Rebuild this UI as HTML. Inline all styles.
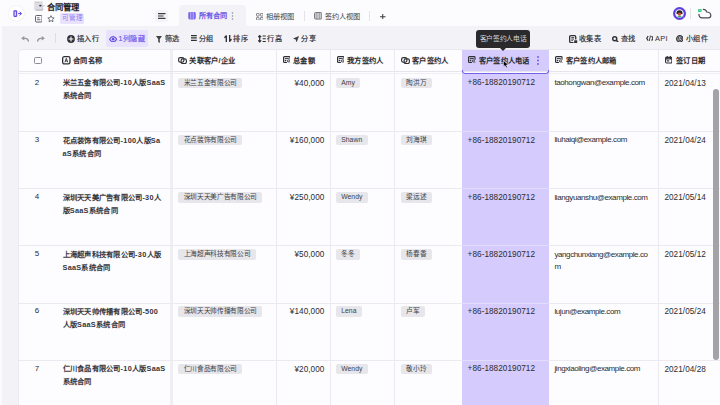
<!DOCTYPE html>
<html lang="zh-CN">
<head>
<meta charset="utf-8">
<style>
*{margin:0;padding:0;box-sizing:border-box}
html,body{width:720px;height:405px;overflow:hidden;background:#fcfbfe;font-family:"Liberation Sans",sans-serif;color:#1f2329}
.a{position:absolute}
#top{left:0;top:0;width:720px;height:26px;background:#fcfbfe}
#tb{left:0;top:26px;width:720px;height:379px;background:#f3f2f7}
#card{left:19px;top:50px;width:701px;height:355px;background:#fdfcff;border-top-left-radius:4px;overflow:hidden;box-shadow:0 0 0 0.7px #e6e5ec}
.t{white-space:nowrap;line-height:1}
.tbt{font-size:7.2px;letter-spacing:0.5px;font-weight:500;-webkit-text-stroke:0.18px currentColor;color:#2f3035;top:35.2px}
.hd{font-size:7.3px;letter-spacing:0.28px;font-weight:bold;color:#2b2c30;top:56.5px}
.cell{font-size:7.2px;color:#2b2c30}
.name{font-size:7.3px;letter-spacing:0.26px;font-weight:bold;color:#36373c;line-height:13px}
.tag{background:#e6e6eb;border-radius:2px;height:10.5px;font-size:6.7px;letter-spacing:-0.33px;line-height:10.5px;color:#404146;padding:0 5.5px}
.lat{font-size:8.2px;letter-spacing:0.05px;color:#2b2c30}
.num{font-size:8px;color:#2b2c30}
.email{white-space:nowrap;line-height:12.5px;font-size:8px;letter-spacing:-0.4px}
.L{letter-spacing:0.28px}
.tl{font-size:6.8px;letter-spacing:0.05px;padding:0 5.4px}
.vl{top:50px;width:1px;height:355px;background:#ebeaef}
.hl{left:19px;width:701px;height:1px;background:#ebeaef}
</style>
</head>
<body>
<div id="top" class="a"></div>
<div id="tb" class="a"></div>
<div class="a" style="left:0;top:26px;width:1.6px;height:379px;background:#fbfbfd"></div>

<!-- top bar -->
<div class="a" style="left:9.3px;top:6.3px;width:14.6px;height:14.6px;border-radius:50%;background:#fff;box-shadow:0 0 2px rgba(60,60,90,0.13)"></div>
<svg class="a" style="left:12.8px;top:10px" width="10" height="7" viewBox="0 0 10 7"><rect x="0.95" y="0.85" width="2.7" height="5.5" rx="0.5" fill="#d6cdfc" stroke="#5b45e0" stroke-width="1.1"/><path d="M5.1 3.6h3.3M6.6 1.7l1.9 1.9-1.9 1.9" fill="none" stroke="#5b45e0" stroke-width="1"/></svg>
<svg class="a" style="left:33.8px;top:1.4px" width="11" height="10" viewBox="0 0 11 10"><rect x="0.2" y="0.2" width="8.6" height="9.4" rx="0.6" fill="#dedee2"/><rect x="2" y="8.5" width="6.8" height="1.1" fill="#b4b4ba"/><rect x="1.2" y="1" width="4.5" height="0.8" fill="#c8c8cd"/><ellipse cx="6.4" cy="4.6" rx="1.3" ry="0.9" fill="#3d3d42"/><circle cx="10" cy="4.5" r="0.8" fill="#9fe3b8"/><circle cx="8.8" cy="5.8" r="0.8" fill="#c4b8ff"/><circle cx="8.8" cy="7.9" r="0.6" fill="#b3a9f5"/></svg>
<div class="a t" style="left:47px;top:2.9px;font-size:8.3px;font-weight:bold;color:#1f2024">合同管理</div>
<svg class="a" style="left:34.5px;top:15px" width="7.5" height="7.5" viewBox="0 0 8 8"><rect x="0.5" y="0.5" width="7" height="7" rx="1.2" fill="none" stroke="#55565c" stroke-width="1"/><path d="M2.2 3h2.6M2.2 5h3.6" stroke="#55565c" stroke-width="0.9"/></svg>
<svg class="a" style="left:47px;top:14.8px" width="8" height="7.5" viewBox="0 0 24 23"><path d="M12 2l2.9 6.3 6.9.8-5.1 4.7 1.4 6.8L12 17.2 5.9 20.6l1.4-6.8L2.2 9.1l6.9-.8z" fill="none" stroke="#55565c" stroke-width="2.4" stroke-linejoin="round"/></svg>
<div class="a" style="left:60px;top:12.5px;width:24px;height:11px;background:#e8e2fd;border-radius:1.5px"></div>
<div class="a t" style="left:62.3px;top:15.2px;font-size:6.6px;color:#8f7ef0">可管理</div>

<!-- hamburger -->
<div class="a" style="left:155px;top:9.5px;width:12.5px;height:12.5px;border-radius:2.5px;background:#f4f3f8"></div>
<svg class="a" style="left:157.5px;top:13px" width="8" height="6" viewBox="0 0 8 6"><path d="M0 0.6h7.5M0 3h5.5M0 5.4h7.5" stroke="#3a3b40" stroke-width="1.1"/></svg>

<!-- active tab -->
<div class="a" style="left:175.5px;top:23px;width:3px;height:3px;background:radial-gradient(circle at 0 0, transparent 3px, #f3f2f7 3.2px)"></div>
<div class="a" style="left:246px;top:23px;width:3px;height:3px;background:radial-gradient(circle at 100% 0, transparent 3px, #f3f2f7 3.2px)"></div>
<div class="a" style="left:178.5px;top:5px;width:67.5px;height:21px;background:#f3f2f7;border-radius:4px 4px 0 0"></div>
<svg class="a" style="left:188px;top:12px" width="8" height="7.5" viewBox="0 0 8 8"><rect x="0" y="0" width="8" height="8" rx="1.5" fill="#7a66ee"/><path d="M2.7 0v8M5.3 0v8" stroke="#f3f2f7" stroke-width="0.6"/></svg>
<div class="a t" style="left:198.5px;top:12.2px;font-size:7.2px;font-weight:bold;color:#6a57e3">所有合同</div>
<svg class="a" style="left:231px;top:12px" width="3" height="8" viewBox="0 0 3 8"><circle cx="1.5" cy="1" r="0.8" fill="#8d8e95"/><circle cx="1.5" cy="4" r="0.8" fill="#8d8e95"/><circle cx="1.5" cy="7" r="0.8" fill="#8d8e95"/></svg>

<!-- other tabs -->
<svg class="a" style="left:255.8px;top:12.5px" width="7.5" height="7.5" viewBox="0 0 8 8"><rect x="0.5" y="0.5" width="2.8" height="2.8" rx="0.6" fill="none" stroke="#6e6f76" stroke-width="0.9"/><rect x="4.7" y="0.5" width="2.8" height="2.8" rx="0.6" fill="none" stroke="#6e6f76" stroke-width="0.9"/><rect x="0.5" y="4.7" width="2.8" height="2.8" rx="0.6" fill="none" stroke="#6e6f76" stroke-width="0.9"/><rect x="4.7" y="4.7" width="2.8" height="2.8" rx="0.6" fill="none" stroke="#6e6f76" stroke-width="0.9"/></svg>
<div class="a t" style="left:266px;top:12.5px;font-size:7.2px;color:#3a3b40">相册视图</div>
<div class="a" style="left:303.5px;top:10.5px;width:1px;height:10px;background:#e3e3e8"></div>
<svg class="a" style="left:313.6px;top:12.4px" width="8.4" height="7.6" viewBox="0 0 8.4 7.6"><rect x="0.5" y="0.5" width="7.4" height="6.6" rx="1.2" fill="#c9cacf" stroke="#77787e" stroke-width="1"/><path d="M2.8 0.8v6M5.6 0.8v6" stroke="#8e8f95" stroke-width="0.7"/></svg>
<div class="a t" style="left:324.5px;top:12.5px;font-size:7.2px;color:#3a3b40">签约人视图</div>
<div class="a" style="left:369px;top:10.5px;width:1px;height:10px;background:#e3e3e8"></div>
<svg class="a" style="left:380px;top:13.5px" width="5.5" height="5.5" viewBox="0 0 6 6"><path d="M3 0v6M0 3h6" stroke="#3a3b40" stroke-width="1.1"/></svg>

<!-- avatar / cloud -->
<svg class="a" style="left:672.8px;top:7px" width="13" height="13" viewBox="0 0 26 26"><circle cx="13" cy="13" r="13" fill="#5b40dc"/><circle cx="13" cy="13" r="8.6" fill="#f2efff"/><path d="M7 12.5a6 6 0 0 1 12 0v1.5H7z" fill="#2e2424"/><ellipse cx="13" cy="14.2" rx="3.6" ry="3.4" fill="#b9553a"/><path d="M8.5 19.5c1.5-1.6 3-2 4.5-2s3 .4 4.5 2a8.6 8.6 0 0 1-9 0z" fill="#3aa86b"/><circle cx="6" cy="6" r="1" fill="#a98df7"/><circle cx="20.5" cy="20" r="1" fill="#a98df7"/></svg>
<div class="a" style="left:690px;top:8px;width:1px;height:11px;background:#e3e3e8"></div>
<svg class="a" style="left:694px;top:5px" width="22" height="16" viewBox="0 0 22 16"><path d="M9.4 4.4C11 4.4 12.2 5.4 12.8 7C15 7 16.8 8.6 16.8 10.6C16.8 12.1 15.7 12.9 14.4 12.9H8C6.1 12.9 4.9 11.3 4.9 9.3" fill="none" stroke="#4a4b51" stroke-width="1.2" stroke-linecap="round"/><rect x="4" y="4" width="3.7" height="3" rx="0.4" fill="#3fcf8a"/><circle cx="6" cy="5.5" r="0.8" fill="#7be0a8"/></svg>

<!-- toolbar -->
<svg class="a" style="left:21px;top:35.6px" width="8" height="6" viewBox="0 0 8 6"><path d="M0 2.3L3.3 0v4.6z" fill="#98999f"/><path d="M3 2.3h1.3c1.9 0 3 1.2 3.2 3.3" fill="none" stroke="#98999f" stroke-width="1.3"/></svg>
<svg class="a" style="left:37px;top:35.6px" width="8" height="6" viewBox="0 0 8 6"><path d="M8 2.3L4.7 0v4.6z" fill="#98999f"/><path d="M5 2.3H3.7C1.8 2.3.7 3.5.5 5.6" fill="none" stroke="#98999f" stroke-width="1.3"/></svg>
<div class="a" style="left:55px;top:33px;width:1px;height:10px;background:#dedde3"></div>

<svg class="a" style="left:66.5px;top:34.8px" width="8" height="8" viewBox="0 0 8 8"><circle cx="4" cy="4" r="3.9" fill="#2f3035"/><path d="M4 1.6v4.8M1.6 4h4.8" stroke="#fff" stroke-width="1.1"/></svg>
<div class="a t tbt" style="left:76.5px">插入行</div>

<div class="a" style="left:105.5px;top:30px;width:42.5px;height:17px;background:#e8e2fd;border-radius:2px"></div>
<svg class="a" style="left:108.8px;top:35.6px" width="8.2" height="6.4" viewBox="0 0 8.2 6.4"><path d="M0.6 3.2C1.6 1.4 2.8 0.6 4.1 0.6S6.6 1.4 7.6 3.2C6.6 5 5.4 5.8 4.1 5.8S1.6 5 0.6 3.2z" fill="none" stroke="#6552e0" stroke-width="1.2"/><circle cx="4.1" cy="3.2" r="1.35" fill="#6552e0"/></svg>
<div class="a t tbt" style="left:118.5px;color:#6e5ae8">1列隐藏</div>

<svg class="a" style="left:156px;top:35.5px" width="6" height="7" viewBox="0 0 6 7"><path d="M0 0h6L3.8 3v4L2.2 6V3z" fill="#404146"/></svg>
<div class="a t tbt" style="left:164.5px">筛选</div>
<svg class="a" style="left:191.3px;top:35px" width="6" height="6" viewBox="0 0 6 6"><path d="M0 0.6h5.8M0 2.95h5.8M0 5.3h5.8" stroke="#2f3035" stroke-width="1.25"/></svg>
<div class="a t tbt" style="left:198.5px">分组</div>
<svg class="a" style="left:223.6px;top:35.2px" width="8" height="7" viewBox="0 0 8 7"><path d="M2.3 7V0.8L0.4 2.7M5.7 0v6.2l1.9-1.9" fill="none" stroke="#2f3035" stroke-width="1.35" stroke-linejoin="round"/></svg>
<div class="a t tbt" style="left:233px">排序</div>
<svg class="a" style="left:257.6px;top:35px" width="8" height="7.5" viewBox="0 0 8 7.5"><path d="M1.7 0.6v6.3M0.2 2.1l1.5-1.5 1.5 1.5M0.2 5.4l1.5 1.5 1.5-1.5" fill="none" stroke="#2f3035" stroke-width="1.2"/><path d="M4.6 1h3.2M4.6 3.75h3.2M4.6 6.5h3.2" stroke="#2f3035" stroke-width="1.2"/></svg>
<div class="a t tbt" style="left:267px">行高</div>
<svg class="a" style="left:293px;top:35.5px" width="6" height="6.5" viewBox="0 0 6 6.5"><path d="M6 0L0 2.6l2.6 1 1 2.9z" fill="#404146"/></svg>
<div class="a t tbt" style="left:301px">分享</div>

<svg class="a" style="left:569px;top:34.5px" width="8.6" height="8.2" viewBox="0 0 8.6 8.2"><path d="M4.6 7.55H1.9A1.25 1.25 0 0 1 .65 6.3V1.9A1.25 1.25 0 0 1 1.9.65h3.6A1.25 1.25 0 0 1 6.75 1.9V4.5" fill="none" stroke="#2f3035" stroke-width="1.3"/><path d="M2.3 2.6h2.8M2.3 4.1h2.8M2.3 5.6h1.6" stroke="#2f3035" stroke-width="0.9"/><path d="M5.2 5.3h3v2.9h-3z" fill="#2f3035"/></svg>
<div class="a t tbt" style="left:578.5px">收集表</div>
<svg class="a" style="left:612.2px;top:35.6px" width="6.6" height="6.6" viewBox="0 0 7 7"><circle cx="2.9" cy="2.9" r="2.15" fill="none" stroke="#2f3035" stroke-width="1.5"/><path d="M4.5 4.5L6.5 6.5" stroke="#2f3035" stroke-width="1.6"/></svg>
<div class="a t tbt" style="left:620.5px">查找</div>
<svg class="a" style="left:645.6px;top:35.3px" width="7.8" height="6.6" viewBox="0 0 7.8 6.6"><path d="M2.2 1L0.7 3.3 2.2 5.6M5.6 1l1.5 2.3-1.5 2.3" fill="none" stroke="#2f3035" stroke-width="1.2" stroke-linejoin="round"/><path d="M4.5 0.6L3.3 6" stroke="#2f3035" stroke-width="0.9"/></svg>
<div class="a t tbt" style="left:655px;font-weight:normal;-webkit-text-stroke:0;font-size:7.4px;letter-spacing:0.3px;top:35.4px">API</div>
<svg class="a" style="left:675.8px;top:34.8px" width="7.6" height="7.6" viewBox="0 0 8 8"><circle cx="4" cy="4" r="3.35" fill="none" stroke="#2f3035" stroke-width="1.25"/><path d="M4 1.9L5.9 3v2.1L4 6.2 2.1 5.1V3z" fill="none" stroke="#2f3035" stroke-width="0.9"/><path d="M2.1 3L4 4.1 5.9 3M4 4.1v2.1" fill="none" stroke="#2f3035" stroke-width="0.7"/></svg>
<div class="a t tbt" style="left:685.5px">小组件</div>

<div id="card" class="a"></div>
<div class="a" style="left:461.5px;top:50px;width:87px;height:355px;background:#d5cbfc"></div>
<div class="a" style="left:276px;top:50px;width:1px;height:355px;background:#ebeaf0"></div>
<div class="a" style="left:330px;top:50px;width:1px;height:355px;background:#ebeaf0"></div>
<div class="a" style="left:394px;top:50px;width:1px;height:355px;background:#ebeaf0"></div>
<div class="a" style="left:658px;top:50px;width:1px;height:355px;background:#ebeaf0"></div>
<div class="a" style="left:170px;top:50px;width:3px;height:355px;background:#efeef3"></div>
<div class="a" style="left:19px;top:70.5px;width:701px;height:1px;background:#e6e5eb"></div>
<div class="a" style="left:19px;top:73px;width:701px;height:1px;background:#efeef3"></div>
<div class="a" style="left:462.5px;top:71.6px;width:85px;height:1.3px;background:#fbfaff"></div>
<div class="a" style="left:461.5px;top:70.4px;width:87px;height:4px;border:1.6px solid #7361ea;border-top:none;border-radius:0 0 3px 3px"></div>
<div class="a" style="left:19px;top:131px;width:701px;height:1px;background:#ebeaf0"></div>
<div class="a" style="left:461.5px;top:131px;width:87px;height:1px;background:#e3ddfd"></div>
<div class="a" style="left:19px;top:188.2px;width:701px;height:1px;background:#ebeaf0"></div>
<div class="a" style="left:461.5px;top:188.2px;width:87px;height:1px;background:#e3ddfd"></div>
<div class="a" style="left:19px;top:245.4px;width:701px;height:1px;background:#ebeaf0"></div>
<div class="a" style="left:461.5px;top:245.4px;width:87px;height:1px;background:#e3ddfd"></div>
<div class="a" style="left:19px;top:302.6px;width:701px;height:1px;background:#ebeaf0"></div>
<div class="a" style="left:461.5px;top:302.6px;width:87px;height:1px;background:#e3ddfd"></div>
<div class="a" style="left:19px;top:359.8px;width:701px;height:1px;background:#ebeaf0"></div>
<div class="a" style="left:461.5px;top:359.8px;width:87px;height:1px;background:#e3ddfd"></div>
<div class="a" style="left:34.4px;top:56.9px;width:7.5px;height:7px;border:1px solid #8d8e94;border-radius:1.5px"></div>
<svg class="a" style="left:62.3px;top:56.2px" width="8.6" height="8.6" viewBox="0 0 8.6 8.6"><rect x="0.65" y="0.65" width="7.3" height="7.3" rx="1.6" fill="none" stroke="#2f3035" stroke-width="1.3"/><path d="M2.9 6.3L4.3 2.3l1.4 4M3.4 5h1.8" fill="none" stroke="#2f3035" stroke-width="0.9"/></svg>
<div class="a t hd" style="left:73.1px">合同名称</div>
<svg class="a" style="left:178px;top:56.9px" width="9" height="7.2" viewBox="0 0 9 7.2"><rect x="0.6" y="0.6" width="5.3" height="4.7" rx="1.7" fill="none" stroke="#2f3035" stroke-width="1.15"/><rect x="3.1" y="1.9" width="5.3" height="4.7" rx="1.7" fill="none" stroke="#2f3035" stroke-width="1.15"/></svg>
<div class="a t hd" style="left:189.3px">关联客户/企业</div>
<svg class="a" style="left:282.6px;top:56.4px" width="7.6" height="7.2" viewBox="0 0 8 7.6"><path d="M4.2 6.9H1.4a.8.8 0 0 1-.8-.8V1.4a.8.8 0 0 1 .8-.8h5.2a.8.8 0 0 1 .8.8v2.6" fill="none" stroke="#2f3035" stroke-width="1.2"/><path d="M1.9 2.7h4.2" stroke="#2f3035" stroke-width="1"/><rect x="1.8" y="4" width="1.6" height="1.6" fill="#2f3035"/><circle cx="5.7" cy="5.2" r="1.15" fill="none" stroke="#2f3035" stroke-width="0.9"/><path d="M6.5 6l1.1 1.1" stroke="#2f3035" stroke-width="0.9"/></svg>
<div class="a t hd" style="left:293px">总金额</div>
<svg class="a" style="left:336.7px;top:56.4px" width="7.6" height="7.2" viewBox="0 0 8 7.6"><path d="M4.2 6.9H1.4a.8.8 0 0 1-.8-.8V1.4a.8.8 0 0 1 .8-.8h5.2a.8.8 0 0 1 .8.8v2.6" fill="none" stroke="#2f3035" stroke-width="1.2"/><path d="M1.9 2.7h4.2" stroke="#2f3035" stroke-width="1"/><rect x="1.8" y="4" width="1.6" height="1.6" fill="#2f3035"/><circle cx="5.7" cy="5.2" r="1.15" fill="none" stroke="#2f3035" stroke-width="0.9"/><path d="M6.5 6l1.1 1.1" stroke="#2f3035" stroke-width="0.9"/></svg>
<div class="a t hd" style="left:347px">我方签约人</div>
<svg class="a" style="left:400.7px;top:56.9px" width="9" height="7.2" viewBox="0 0 9 7.2"><rect x="0.6" y="0.6" width="5.3" height="4.7" rx="1.7" fill="none" stroke="#2f3035" stroke-width="1.15"/><rect x="3.1" y="1.9" width="5.3" height="4.7" rx="1.7" fill="none" stroke="#2f3035" stroke-width="1.15"/></svg>
<div class="a t hd" style="left:412px">客户签约人</div>
<svg class="a" style="left:468px;top:56.4px" width="7.6" height="7.2" viewBox="0 0 8 7.6"><path d="M4.2 6.9H1.4a.8.8 0 0 1-.8-.8V1.4a.8.8 0 0 1 .8-.8h5.2a.8.8 0 0 1 .8.8v2.6" fill="none" stroke="#2f3035" stroke-width="1.2"/><path d="M1.9 2.7h4.2" stroke="#2f3035" stroke-width="1"/><rect x="1.8" y="4" width="1.6" height="1.6" fill="#2f3035"/><circle cx="5.7" cy="5.2" r="1.15" fill="none" stroke="#2f3035" stroke-width="0.9"/><path d="M6.5 6l1.1 1.1" stroke="#2f3035" stroke-width="0.9"/></svg>
<div class="a t hd" style="left:478.8px">客户签约人电话</div>
<svg class="a" style="left:555px;top:56.4px" width="7.6" height="7.2" viewBox="0 0 8 7.6"><path d="M4.2 6.9H1.4a.8.8 0 0 1-.8-.8V1.4a.8.8 0 0 1 .8-.8h5.2a.8.8 0 0 1 .8.8v2.6" fill="none" stroke="#2f3035" stroke-width="1.2"/><path d="M1.9 2.7h4.2" stroke="#2f3035" stroke-width="1"/><rect x="1.8" y="4" width="1.6" height="1.6" fill="#2f3035"/><circle cx="5.7" cy="5.2" r="1.15" fill="none" stroke="#2f3035" stroke-width="0.9"/><path d="M6.5 6l1.1 1.1" stroke="#2f3035" stroke-width="0.9"/></svg>
<div class="a t hd" style="left:565.8px">客户签约人邮箱</div>
<svg class="a" style="left:664.9px;top:56.4px" width="7.5" height="7.6" viewBox="0 0 7.5 7.6"><rect x="0.6" y="1.4" width="6.3" height="5.6" rx="0.9" fill="none" stroke="#2f3035" stroke-width="1.15"/><path d="M2.2 0v2.2M5.3 0v2.2M0.6 2.9h6.3" stroke="#2f3035" stroke-width="1.1"/><rect x="2" y="4" width="2.2" height="1.7" fill="#6a6b70"/></svg>
<div class="a t hd" style="left:676px">签订日期</div>
<svg class="a" style="left:537.3px;top:56px" width="2" height="9" viewBox="0 0 2 9"><circle cx="1" cy="1" r="0.9" fill="#6a55e6"/><circle cx="1" cy="4.5" r="0.9" fill="#6a55e6"/><circle cx="1" cy="8" r="0.9" fill="#6a55e6"/></svg>
<div class="a t cell num" style="left:34.5px;top:78.6px;width:5px;text-align:center">2</div>
<div class="a name" style="left:62.5px;top:76.3px">米兰五金有限公司<span class="L">-10</span>人版<span class="L">SaaS</span><br>系统合同</div>
<div class="a t tag" style="left:178.1px;top:77.6px">米兰五金有限公司</div>
<div class="a t cell lat" style="right:395.6px;top:79.5px">¥40,000</div>
<div class="a t tag tl" style="left:335.8px;top:77.6px">Amy</div>
<div class="a t tag" style="left:400.7px;top:77.6px">陶洪万</div>
<div class="a t cell lat" style="left:467.6px;top:79.3px">+86-18820190712</div>
<div class="a cell lat email" style="left:554.4px;top:77.2px">taohongwan@example.com</div>
<div class="a t cell lat" style="left:664.4px;top:79.5px">2021/04/13</div>
<div class="a t cell num" style="left:34.5px;top:135.8px;width:5px;text-align:center">3</div>
<div class="a name" style="left:62.5px;top:133.5px">花点装饰有限公司<span class="L">-100</span>人版<span class="L">Sa</span><br><span class="L">aS</span>系统合同</div>
<div class="a t tag" style="left:178.1px;top:134.8px">花点装饰有限公司</div>
<div class="a t cell lat" style="right:395.6px;top:136.7px">¥160,000</div>
<div class="a t tag tl" style="left:335.8px;top:134.8px">Shawn</div>
<div class="a t tag" style="left:400.7px;top:134.8px">刘海琪</div>
<div class="a t cell lat" style="left:467.6px;top:136.5px">+86-18820190712</div>
<div class="a cell lat email" style="left:554.4px;top:134.4px">liuhaiqi@example.com</div>
<div class="a t cell lat" style="left:664.4px;top:136.7px">2021/04/24</div>
<div class="a t cell num" style="left:34.5px;top:193.0px;width:5px;text-align:center">4</div>
<div class="a name" style="left:62.5px;top:190.7px">深圳天天美广告有限公司<span class="L">-30</span>人<br>版<span class="L">SaaS</span>系统合同</div>
<div class="a t tag" style="left:178.1px;top:192.0px">深圳天天美广告有限公司</div>
<div class="a t cell lat" style="right:395.6px;top:193.9px">¥250,000</div>
<div class="a t tag tl" style="left:335.8px;top:192.0px">Wendy</div>
<div class="a t tag" style="left:400.7px;top:192.0px">梁远述</div>
<div class="a t cell lat" style="left:467.6px;top:193.7px">+86-18820190712</div>
<div class="a cell lat email" style="left:554.4px;top:191.6px">liangyuanshu@example.com</div>
<div class="a t cell lat" style="left:664.4px;top:193.9px">2021/05/14</div>
<div class="a t cell num" style="left:34.5px;top:250.2px;width:5px;text-align:center">5</div>
<div class="a name" style="left:62.5px;top:247.9px">上海超声科技有限公司<span class="L">-30</span>人版<br><span class="L">SaaS</span>系统合同</div>
<div class="a t tag" style="left:178.1px;top:249.2px">上海超声科技有限公司</div>
<div class="a t cell lat" style="right:395.6px;top:251.1px">¥50,000</div>
<div class="a t tag" style="left:335.8px;top:249.2px">冬冬</div>
<div class="a t tag" style="left:400.7px;top:249.2px">杨春香</div>
<div class="a t cell lat" style="left:467.6px;top:250.9px">+86-18820190712</div>
<div class="a cell lat email" style="left:554.4px;top:248.8px">yangchunxiang@example.co<br>m</div>
<div class="a t cell lat" style="left:664.4px;top:251.1px">2021/05/12</div>
<div class="a t cell num" style="left:34.5px;top:307.4px;width:5px;text-align:center">6</div>
<div class="a name" style="left:62.5px;top:305.1px">深圳天天帅传播有限公司<span class="L">-500</span><br>人版<span class="L">SaaS</span>系统合同</div>
<div class="a t tag" style="left:178.1px;top:306.4px">深圳天天帅传播有限公司</div>
<div class="a t cell lat" style="right:395.6px;top:308.3px">¥140,000</div>
<div class="a t tag tl" style="left:335.8px;top:306.4px">Lena</div>
<div class="a t tag" style="left:400.7px;top:306.4px">卢军</div>
<div class="a t cell lat" style="left:467.6px;top:308.1px">+86-18820190712</div>
<div class="a cell lat email" style="left:554.4px;top:306.0px">lujun@example.com</div>
<div class="a t cell lat" style="left:664.4px;top:308.3px">2021/05/24</div>
<div class="a t cell num" style="left:34.5px;top:364.6px;width:5px;text-align:center">7</div>
<div class="a name" style="left:62.5px;top:362.3px">仁川食品有限公司<span class="L">-10</span>人版<span class="L">SaaS</span><br>系统合同</div>
<div class="a t tag" style="left:178.1px;top:363.6px">仁川食品有限公司</div>
<div class="a t cell lat" style="right:395.6px;top:365.5px">¥20,000</div>
<div class="a t tag tl" style="left:335.8px;top:363.6px">Wendy</div>
<div class="a t tag" style="left:400.7px;top:363.6px">敬小玲</div>
<div class="a t cell lat" style="left:467.6px;top:365.3px">+86-18820190712</div>
<div class="a cell lat email" style="left:554.4px;top:363.2px">jingxiaoling@example.com</div>
<div class="a t cell lat" style="left:664.4px;top:365.5px">2021/04/28</div>
<div class="a" style="left:713.3px;top:88.5px;width:5.5px;height:271px;background:#a3a3a8;border-radius:3px"></div>
<div class="a" style="left:475.6px;top:29.8px;width:54.5px;height:18px;background:#2a2a2d;border-radius:3px"></div>
<div class="a" style="left:499.6px;top:47.6px;width:0;height:0;border-left:3.4px solid transparent;border-right:3.4px solid transparent;border-top:3px solid #2a2a2d"></div>
<div class="a t" style="left:479.8px;top:35.6px;font-size:6.8px;letter-spacing:-0.38px;color:#d2d2d6">客户签约人电话</div>
<svg class="a" style="left:503.2px;top:60.2px" width="6" height="8" viewBox="0 0 6 8"><path d="M0.5 0.5v6.2l1.5-1.3 1.2 2.3 1.1-.5-1.1-2.2h2z" fill="#000" stroke="#f4f2ff" stroke-width="0.5" stroke-linejoin="round"/></svg>
</body>
</html>
